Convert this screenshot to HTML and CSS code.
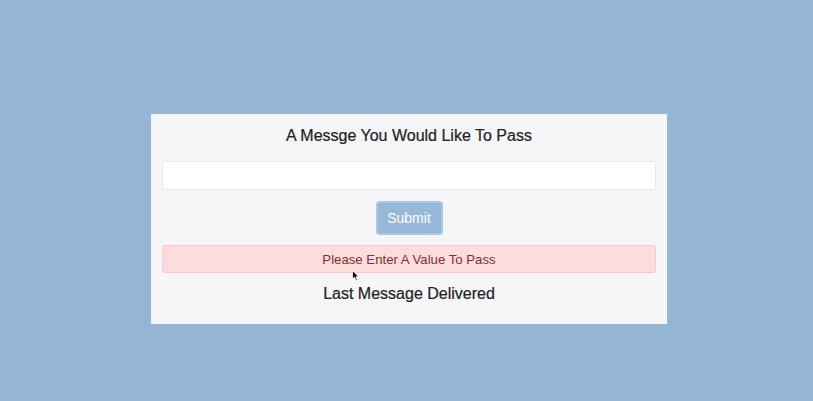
FILE: index.html
```html
<!DOCTYPE html>
<html>
<head>
<meta charset="utf-8">
<link rel="stylesheet" href="styles.css">
</head>
<body>
<div class="page">
  <div class="card">
    <h2 class="title">A Messge You Would Like To Pass</h2>
    <input class="field" type="text">
    <button class="submit">Submit</button>
    <div class="alert">Please Enter A Value To Pass</div>
    <h3 class="last">Last Message Delivered</h3>
    <svg class="cursor" width="8" height="12" viewBox="0 0 8 12"><path d="M0.5 0.5 L0.5 9 L2.6 7.2 L4 10.8 L5.4 10.2 L4 6.8 L6.8 6.8 Z" fill="#111" stroke="#fff" stroke-width="0.8"/></svg>
  </div>
</div>
</body>
</html>
```
FILE: styles.css
```css
html, body {
  margin: 0;
  padding: 0;
  background: #95b5d5;
  font-family: "Liberation Sans", Arial, sans-serif;
}
.page {
  width: 813px;
  height: 401px;
  display: flex;
  justify-content: center;
  padding-top: 114px;
  box-sizing: border-box;
  padding-left: 5px;
}
.card {
  position: relative;
  width: 516px;
  height: 210px;
  background: #f6f5f8;
  box-sizing: border-box;
  padding: 12px 11px 0;
  display: flex;
  flex-direction: column;
  align-items: center;
}
.title {
  margin: 0;
  font-size: 16px;
  font-weight: normal;
  color: #222;
  line-height: 20px;
  -webkit-text-stroke: 0.2px #222;
}
.field {
  margin-top: 15px;
  width: 100%;
  height: 29px;
  box-sizing: border-box;
  border: 1px solid #e9e8ec;
  border-radius: 2px;
  background: #fff;
}
.submit {
  margin-top: 11px;
  width: 67px;
  height: 34px;
  background: #98b8d8;
  border: 2px solid #a9c6e6;
  border-radius: 4px;
  color: #fff;
  font-family: "Liberation Sans", Arial, sans-serif;
  font-size: 14px;
  padding: 0;
}
.alert {
  margin-top: 10px;
  width: 100%;
  height: 28px;
  box-sizing: border-box;
  background: #fddcdd;
  border: 1px solid #f7c9cc;
  border-radius: 3px;
  color: #83302f;
  font-size: 13.2px;
  display: flex;
  align-items: center;
  justify-content: center;
}
.last {
  margin: 11px 0 0;
  font-size: 16px;
  font-weight: normal;
  color: #222;
  line-height: 20px;
  -webkit-text-stroke: 0.2px #222;
}
.cursor {
  position: absolute;
  left: 201px;
  top: 156px;
}
```
